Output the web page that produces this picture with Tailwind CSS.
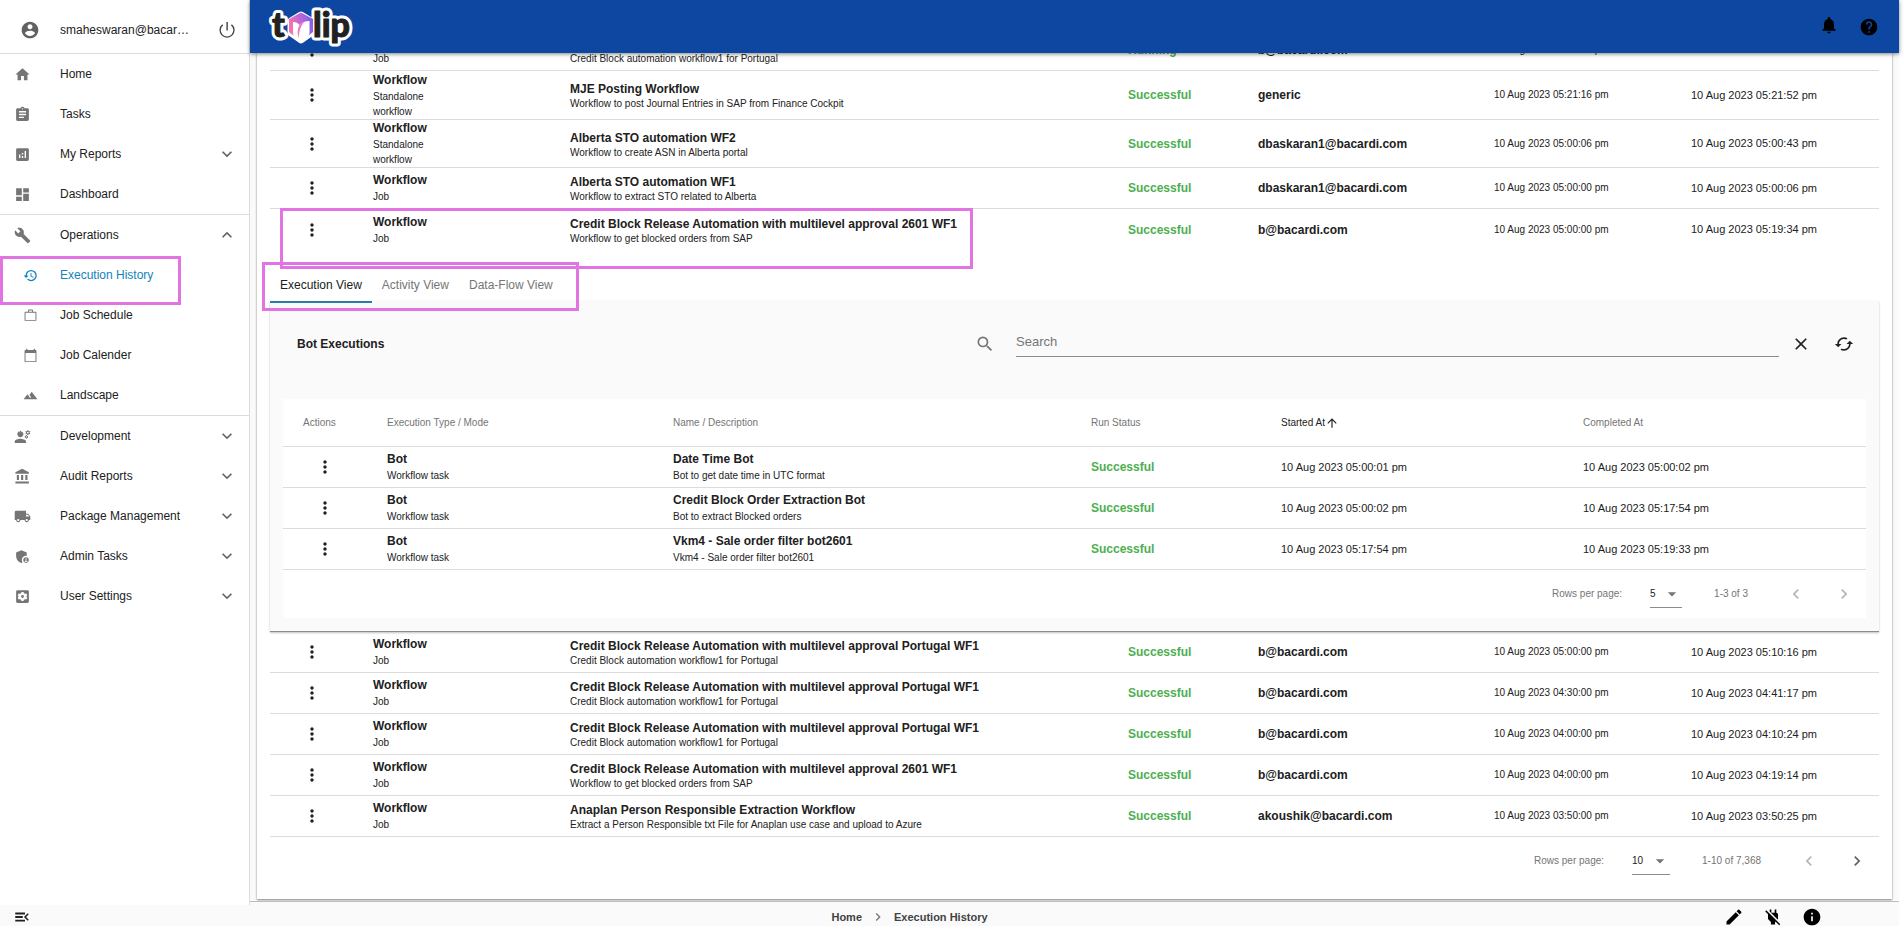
<!DOCTYPE html>
<html lang="en">
<head>
    <meta charset="UTF-8">
    <meta name="viewport" content="width=device-width, initial-scale=1.0">
    <title>Execution History</title>
    <script src="https://cdn.jsdelivr.net/npm/@tailwindcss/browser@4"></script>
</head>
<body class="flex h-screen flex-col overflow-hidden bg-white pr-[5px] pb-[9px] font-['Liberation_Sans',Arial,sans-serif] text-xs text-[#212121]">

    <!-- Icon sprite -->
    <svg class="hidden" xmlns="http://www.w3.org/2000/svg">
        <symbol id="i-account" viewBox="0 0 24 24"><path d="M12 2C6.480 2 2 6.480 2 12s4.480 10 10 10 10-4.480 10-10S17.520 2 12 2zm0 3c1.660 0 3 1.340 3 3s-1.340 3-3 3-3-1.340-3-3 1.340-3 3-3zm0 14.200c-2.500 0-4.710-1.280-6-3.220.03-1.990 4-3.080 6-3.080 1.990 0 5.970 1.090 6 3.080-1.290 1.940-3.500 3.220-6 3.220z"/></symbol>
        <symbol id="i-power" viewBox="0 0 24 24"><path d="M13 2.500h-1.700v10h1.700zm4.900 2.600-1.200 1.200A7.500 7.500 0 1 1 7.400 6.300L6.200 5.100a9.100 9.100 0 1 0 11.700 0z"/></symbol>
        <symbol id="i-home" viewBox="0 0 24 24"><path d="M10 20v-6h4v6h5v-8h3L12 3 2 12h3v8z"/></symbol>
        <symbol id="i-tasks" viewBox="0 0 24 24"><path d="M19 3h-4.180C14.400 1.840 13.300 1 12 1s-2.400.840-2.820 2H5c-1.100 0-2 .9-2 2v14c0 1.100.9 2 2 2h14c1.100 0 2-.9 2-2V5c0-1.100-.9-2-2-2zm-7 0c.55 0 1 .45 1 1s-.45 1-1 1-1-.45-1-1 .45-1 1-1zm2 14H7v-2h7v2zm3-4H7v-2h10v2zm0-4H7V7h10v2z"/></symbol>
        <symbol id="i-reports" viewBox="0 0 24 24"><path d="M19 3H5c-1.100 0-2 .9-2 2v14c0 1.100.9 2 2 2h14c1.100 0 2-.9 2-2V5c0-1.100-.9-2-2-2zM9 17H7v-5h2v5zm4 0h-2v-3h2v3zm0-5h-2v-2h2v2zm4 5h-2V7h2v10z"/></symbol>
        <symbol id="i-dashboard" viewBox="0 0 24 24"><path d="M3 13h8V3H3v10zm0 8h8v-6H3v6zm10 0h8V11h-8v10zm0-18v6h8V3h-8z"/></symbol>
        <symbol id="i-build" viewBox="0 0 24 24"><path d="M22.700 19l-9.100-9.100c.9-2.300.4-5-1.500-6.900-2-2-5-2.400-7.400-1.300L9 6 6 9 1.600 4.700C.4 7.100.9 10.100 2.900 12.100c1.900 1.900 4.600 2.400 6.900 1.500l9.100 9.100c.4.4 1 .4 1.400 0l2.300-2.300c.5-.4.5-1.100.1-1.400z"/></symbol>
        <symbol id="i-history" viewBox="0 0 24 24"><path d="M13 3a9 9 0 0 0-9 9H1l3.890 3.890.07.14L9 12H6c0-3.870 3.130-7 7-7s7 3.130 7 7-3.130 7-7 7c-1.930 0-3.680-.79-4.940-2.060l-1.420 1.420A8.954 8.954 0 0 0 13 21a9 9 0 0 0 0-18zm-1 5v5l4.280 2.540.72-1.210-3.500-2.080V8H12z"/></symbol>
        <symbol id="i-work" viewBox="0 0 24 24"><path d="M14.500 6V4h-5v2h5zM4 7.500v11.500h16V7.500H4zM20 6c1.110 0 1.500.89 1.500 2v11c0 1.110-.39 1.500-1.500 1.500H4c-1.110 0-1.500-.39-1.500-1.500V8c0-1.110.39-2 1.500-2h4V4c0-1.110.890-1.500 2-1.500h4c1.110 0 2 .39 2 1.500v2h4z"/></symbol>
        <symbol id="i-calendar" viewBox="0 0 24 24"><path d="M20 3h-1V1h-2v2H7V1H5v2H4c-1.100 0-1.500.9-1.500 2v16c0 1.100.4 1.500 1.500 1.500h16c1.100 0 1.500-.4 1.500-1.500V5c0-1.100-.4-2-1.500-2zm0 18H4V8h16v13z"/></symbol>
        <symbol id="i-landscape" viewBox="0 0 24 24"><path d="M14 6l-3.750 5 2.850 3.800-1.600 1.200C9.810 13.750 7 10 7 10l-6 8h22L14 6z"/></symbol>
        <symbol id="i-engineering" viewBox="0 0 24 24"><path d="M9 15c-2.670 0-8 1.340-8 4v2h16v-2c0-2.660-5.330-4-8-4zM4.740 9H5c0 2.210 1.790 4 4 4s4-1.790 4-4h.26c.27 0 .49-.22.49-.49v-.02c0-.27-.22-.49-.49-.49H13c0-1.480-.81-2.750-2-3.450v.95c0 .28-.22.5-.5.500s-.5-.22-.5-.5V4.140C9.680 4.060 9.350 4 9 4s-.68.060-1 .14V5.500c0 .28-.22.5-.5.5S7 5.780 7 5.500v-.95C5.810 5.250 5 6.520 5 8h-.26c-.27 0-.49.220-.49.490v.03c0 .26.22.48.49.48zM21.980 6.230l.93-.83-.75-1.300-1.190.390c-.14-.11-.3-.2-.47-.27L20.250 3h-1.500l-.25 1.220c-.17.070-.33.16-.48.27l-1.180-.39-.75 1.300.93.830c-.2.170-.2.350 0 .520l-.93.850.75 1.300 1.200-.38c.13.100.28.180.43.25l.28 1.230h1.500l.27-1.220c.16-.07.3-.15.44-.25l1.190.38.75-1.300-.93-.85c.03-.19.020-.36.010-.530zM19.500 7.750a1.250 1.250 0 1 1 0-2.500 1.250 1.250 0 0 1 0 2.500zM19.400 10.790l-.85.280c-.1-.08-.21-.14-.33-.19l-.18-.88h-1.070l-.18.870c-.12.050-.24.120-.34.19l-.84-.28-.54.930.66.590c-.1.130-.1.250 0 .370l-.66.610.54.930.86-.27c.1.070.2.130.31.180l.18.880h1.070l.19-.87c.11-.05.22-.11.32-.18l.85.270.54-.93-.66-.61c.1-.13.1-.25 0-.37l.66-.590-.53-.93zm-1.900 2.600a.89.89 0 1 1 0-1.780.89.89 0 0 1 0 1.780z"/></symbol>
        <symbol id="i-bank" viewBox="0 0 24 24"><path d="M4 10v7h3v-7H4zm6 0v7h3v-7h-3zM2 22h19v-3H2v3zm14-12v7h3v-7h-3zm-4.500-9L2 6v2h19V6l-9.500-5z"/></symbol>
        <symbol id="i-truck" viewBox="0 0 24 24"><path d="M20 8h-3V4H3c-1.100 0-2 .9-2 2v11h2c0 1.660 1.340 3 3 3s3-1.340 3-3h6c0 1.660 1.340 3 3 3s3-1.340 3-3h2v-5l-3-4zM6 18.500c-.83 0-1.500-.67-1.500-1.500s.67-1.500 1.500-1.500 1.500.67 1.500 1.500-.67 1.500-1.500 1.500zm13.500-9l1.960 2.500H17V9.500h2.500zm-1.500 9c-.83 0-1.500-.67-1.500-1.500s.67-1.500 1.500-1.500 1.500.67 1.500 1.500-.67 1.500-1.500 1.500z"/></symbol>
        <symbol id="i-admin" viewBox="0 0 24 24"><path d="M17 11c.34 0 .67.040 1 .09V6.270L10.500 3 3 6.270v4.910c0 4.540 3.200 8.790 7.500 9.820.55-.13 1.080-.32 1.600-.55-.69-.98-1.100-2.170-1.100-3.450 0-3.310 2.690-6 6-6z"/><path d="M17 13c-2.210 0-4 1.790-4 4s1.790 4 4 4 4-1.790 4-4-1.790-4-4-4zm0 1.380c.62 0 1.120.51 1.120 1.120s-.51 1.120-1.120 1.120-1.120-.51-1.120-1.120.5-1.120 1.120-1.120zm0 5.370c-.93 0-1.740-.46-2.240-1.170.05-.72 1.510-1.080 2.240-1.080s2.190.36 2.240 1.080c-.5.710-1.310 1.170-2.240 1.170z"/></symbol>
        <symbol id="i-settings" viewBox="0 0 24 24"><path fill-rule="evenodd" d="M5 3h14a2 2 0 0 1 2 2v14a2 2 0 0 1-2 2H5a2 2 0 0 1-2-2V5a2 2 0 0 1 2-2zm5.500 2.500L10 7.400l-1.400.8-1.900-.6-1.500 2.600L6.600 12l-1.400 1.800 1.500 2.600 1.900-.6 1.400.8.5 1.900h3l.5-1.900 1.400-.8 1.900.6 1.500-2.600-1.400-1.800 1.400-1.800-1.500-2.600-1.900.6-1.400-.8-.5-1.900h-3zM12 10a2 2 0 1 1 0 4 2 2 0 0 1 0-4z"/></symbol>
        <symbol id="i-down" viewBox="0 0 24 24"><path d="M16.590 8.590 12 13.170 7.410 8.590 6 10l6 6 6-6z"/></symbol>
        <symbol id="i-up" viewBox="0 0 24 24"><path d="M12 8l-6 6 1.410 1.410L12 10.830l4.590 4.580L18 14z"/></symbol>
        <symbol id="i-left" viewBox="0 0 24 24"><path d="M15.410 7.410 14 6l-6 6 6 6 1.410-1.410L10.830 12z"/></symbol>
        <symbol id="i-right" viewBox="0 0 24 24"><path d="M10 6 8.590 7.410 13.170 12l-4.580 4.590L10 18l6-6z"/></symbol>
        <symbol id="i-drop" viewBox="0 0 24 24"><path d="M7 10l5 5 5-5z"/></symbol>
        <symbol id="i-more" viewBox="0 0 24 24"><path d="M12 8c1.100 0 2-.9 2-2s-.9-2-2-2-2 .9-2 2 .9 2 2 2zm0 2c-1.100 0-2 .9-2 2s.9 2 2 2 2-.9 2-2-.9-2-2-2zm0 6c-1.100 0-2 .9-2 2s.9 2 2 2 2-.9 2-2-.9-2-2-2z"/></symbol>
        <symbol id="i-bell" viewBox="0 0 24 24"><path d="M12 22c1.100 0 2-.9 2-2h-4c0 1.100.9 2 2 2zm6-6v-5c0-3.070-1.630-5.640-4.500-6.320V4c0-.83-.67-1.500-1.500-1.500s-1.500.67-1.500 1.500v.68C7.640 5.360 6 7.920 6 11v5l-2 2v1h16v-1l-2-2z"/></symbol>
        <symbol id="i-help" viewBox="0 0 24 24"><path d="M12 2C6.480 2 2 6.480 2 12s4.480 10 10 10 10-4.480 10-10S17.520 2 12 2zm1 17h-2v-2h2v2zm2.070-7.750-.9.920C13.450 12.900 13 13.500 13 15h-2v-.5c0-1.100.45-2.100 1.170-2.830l1.240-1.260c.37-.36.59-.86.59-1.410 0-1.100-.9-2-2-2s-2 .9-2 2H8c0-2.210 1.790-4 4-4s4 1.790 4 4c0 .88-.36 1.680-.93 2.250z"/></symbol>
        <symbol id="i-search" viewBox="0 0 24 24"><path d="M15.500 14h-.79l-.28-.27A6.471 6.471 0 0 0 16 9.500 6.500 6.500 0 1 0 9.500 16c1.610 0 3.090-.59 4.230-1.570l.27.28v.79l5 4.990L20.490 19l-4.990-5zm-6 0C7.010 14 5 11.990 5 9.500S7.010 5 9.500 5 14 7.010 14 9.500 11.990 14 9.500 14z"/></symbol>
        <symbol id="i-close" viewBox="0 0 24 24"><path d="M19 6.410 17.590 5 12 10.590 6.410 5 5 6.410 10.590 12 5 17.590 6.410 19 12 13.410 17.590 19 19 17.590 13.410 12z"/></symbol>
        <symbol id="i-refresh" viewBox="0 0 24 24"><path d="M19 8l-4 4h3c0 3.310-2.690 6-6 6-1.010 0-1.970-.25-2.800-.7l-1.460 1.460C8.970 19.540 10.430 20 12 20c4.420 0 8-3.580 8-8h3l-4-4zM6 12c0-3.310 2.690-6 6-6 1.010 0 1.970.25 2.800.7l1.460-1.460C15.030 4.460 13.570 4 12 4c-4.420 0-8 3.580-8 8H1l4 4 4-4H6z"/></symbol>
        <symbol id="i-arrow-up" viewBox="0 0 24 24"><path d="M4 12l1.410 1.410L11 7.830V20h2V7.830l5.580 5.590L20 12l-8-8z"/></symbol>
        <symbol id="i-menu-open" viewBox="0 0 24 24"><path d="M3 18h13v-2.500H3V18zm0-4.800h10v-2.500H3v2.500zM3 6v2.500h13V6H3zm18 9.590L17.420 12 21 8.410 19.590 7l-5 5 5 5L21 15.590z"/></symbol>
        <symbol id="i-edit" viewBox="0 0 24 24"><path d="M3 17.250V21h3.750L17.810 9.940l-3.750-3.750L3 17.250zM20.710 7.040a.996.996 0 0 0 0-1.410l-2.340-2.340a.996.996 0 0 0-1.410 0l-1.830 1.830 3.750 3.750 1.830-1.830z"/></symbol>
        <symbol id="i-plug-off" viewBox="0 0 24 24"><path d="M18 14.490V9c0-1-1.010-2.010-2-2V3h-2v4h-4V3H8v2.480l9.510 9.500.49-.49zm-1.760 1.770L7.200 7.200l-.01.010L3.980 4 2.710 5.250l3.360 3.360C6.040 8.740 6 8.870 6 9v5.480L9.500 18v3h5v-3l.48-.48L19.450 22l1.260-1.280-4.470-4.460z"/></symbol>
        <symbol id="i-info" viewBox="0 0 24 24"><path d="M12 2C6.480 2 2 6.480 2 12s4.480 10 10 10 10-4.480 10-10S17.520 2 12 2zm1 15h-2v-6h2v6zm0-8h-2V7h2v2z"/></symbol>
    </svg>

    <div class="flex min-h-0 flex-1">
        <!-- Side Menu -->
        <aside class="relative w-[250px] shrink-0 border-r border-[#dcdcdc] bg-white">
            <div class="flex h-[54px] items-center border-b border-[#dcdcdc] pt-1.5 pr-3">
                <span class="flex w-[60px] justify-center text-[#616161]"><svg class="size-5 fill-current"><use href="#i-account"/></svg></span>
                <span class="flex-1">smaheswaran@bacar…</span>
                <button type="button" aria-label="Log out"><svg class="size-5 fill-[#424242]"><use href="#i-power"/></svg></button>
            </div>
            <nav id="side-menu"></nav>
            <div class="pointer-events-none absolute top-64 left-0 h-[49px] w-[181px] border-3 border-[#e273e2]"></div>
        </aside>

        <!-- Main Content -->
        <div class="relative flex min-w-0 flex-1 flex-col bg-[#fafafa] pb-[3px]">
            <header class="relative z-10 flex h-[53px] shrink-0 items-center bg-[#0d47a1] pr-5 pl-[18px] shadow-[0_1px_4px_rgba(0,0,0,0.5)]">
                <a href="#" aria-label="tulip">
                    <svg class="h-[46px] w-[88px]" viewBox="0 0 88 46">
                        <defs>
                            <linearGradient id="hex" x1="0" y1="0.3" x2="1" y2="0">
                                <stop offset="0" stop-color="#f472b6"/>
                                <stop offset="0.5" stop-color="#b366d9"/>
                                <stop offset="1" stop-color="#6d5ff2"/>
                            </linearGradient>
                        </defs>
                        <g class="font-['Lato'] text-[34px] font-black" stroke-linejoin="round">
                            <g fill="#fff" stroke="#fff" stroke-width="7">
                                <text x="4" y="33">t</text>
                                <text x="45" y="33">lip</text>
                                <path d="M33 11l10 6v12l-10 7-10-7V17z"/>
                            </g>
                            <g fill="#212121" stroke="#212121" stroke-width="1">
                                <text x="4" y="33">t</text>
                                <text x="45" y="33">lip</text>
                            </g>
                        </g>
                        <path d="M33 8.500l12 6.500v13l-5 4H26l-5-4V15z" fill="url(#hex)"/>
                        <path d="M25 18c3 0 5 1 6.500 3 2.500-3 5.500-4 10-4v11c0 6-4 9-8.500 10-4.500-1-8-4-8-10z" fill="#fff"/>
                        <path d="M31 34c-2-5-1.500-9 .5-13 1.500-2 3-3 5-3.500-3.500 4-5.500 9-5.500 16.500z" fill="#e879c6"/>
                    </svg>
                </a>
                <div class="ml-auto flex gap-5">
                    <button type="button" aria-label="Notifications" class="pb-1"><svg class="size-5 fill-black"><use href="#i-bell"/></svg></button>
                    <button type="button" aria-label="Help"><svg class="size-5 fill-black"><use href="#i-help"/></svg></button>
                </div>
            </header>

            <main class="flex min-h-0 flex-1 flex-col overflow-hidden border-b border-[#bdbdbd] px-[7px] pb-0.5">
                <div class="min-h-0 flex-1 bg-white px-[13px] shadow-[0_1px_2px_rgba(0,0,0,0.5)]">
                    <table class="-mt-[23px] w-full table-fixed border-separate border-spacing-0 text-left">
                        <colgroup>
                            <col class="w-[103px]"><col class="w-[197px]"><col><col class="w-[130px]"><col class="w-[236px]"><col class="w-[197px]"><col class="w-[188px]">
                        </colgroup>
                        <tbody id="rows-before"></tbody>
                        <tbody>
                            <tr>
                                <td colspan="7">
                                    <div role="tablist" class="-mb-0.5 flex h-[53px] text-[#757575]">
                                        <button type="button" role="tab" aria-selected="true" class="border-b-2 border-[#2a7ca8] px-2.5 pt-[26px] pb-2 text-[#212121]">Execution View</button>
                                        <button type="button" role="tab" class="border-b-2 border-transparent px-2.5 pt-[26px] pb-2">Activity View</button>
                                        <button type="button" role="tab" class="border-b-2 border-transparent px-2.5 pt-[26px] pb-2">Data-Flow View</button>
                                    </div>
                                    <section class="border-b border-[#8c8c8c] bg-[#fafafa] px-[13px] pb-[13px] shadow-[0_1px_2px_rgba(0,0,0,0.25)]">
                                        <div class="flex h-[98px] items-center pr-3 pb-3 pl-3.5">
                                            <h2 class="flex-1 font-bold">Bot Executions</h2>
                                            <label for="bot-search" aria-label="Search" class="mr-[21px]"><svg class="size-5 fill-[#757575]"><use href="#i-search"/></svg></label>
                                            <input id="bot-search" type="text" placeholder="Search" class="h-[26px] w-[49%] border-b border-[#8c8c8c] pb-1 text-[13px] outline-none placeholder:text-[#757575]">
                                            <button type="button" aria-label="Clear" class="ml-3"><svg class="size-5 fill-[#212121]"><use href="#i-close"/></svg></button>
                                            <button type="button" aria-label="Refresh" class="ml-[23px]"><svg class="size-5 fill-[#212121]"><use href="#i-refresh"/></svg></button>
                                        </div>
                                        <div class="bg-white">
                                            <table class="w-full table-fixed border-separate border-spacing-0 text-left">
                                                <colgroup>
                                                    <col class="w-[104px]"><col class="w-[286px]"><col><col class="w-[190px]"><col class="w-[302px]"><col class="w-[283px]">
                                                </colgroup>
                                                <thead class="text-[10px] text-[#757575]">
                                                    <tr>
                                                        <th class="h-12 border-b border-[#dcdcdc] pl-5 font-normal">Actions</th>
                                                        <th class="border-b border-[#dcdcdc] font-normal">Execution Type / Mode</th>
                                                        <th class="border-b border-[#dcdcdc] font-normal">Name / Description</th>
                                                        <th class="border-b border-[#dcdcdc] font-normal">Run Status</th>
                                                        <th class="border-b border-[#dcdcdc] font-normal text-[#212121]"><span class="flex items-center">Started At<svg class="size-3.5 fill-current"><use href="#i-arrow-up"/></svg></span></th>
                                                        <th class="border-b border-[#dcdcdc] font-normal">Completed At</th>
                                                    </tr>
                                                </thead>
                                                <tbody id="bot-rows"></tbody>
                                            </table>
                                            <div class="flex h-12 items-center justify-end text-[10px] text-[#757575]">
                                                <label for="bot-size" class="mr-7">Rows per page:</label>
                                                <div class="relative mr-8 w-8">
                                                    <select id="bot-size" class="block h-7 w-full appearance-none border-b border-[#8c8c8c] text-[#212121]"><option>5</option></select>
                                                    <svg class="pointer-events-none absolute top-1 right-0 size-5 fill-[#757575]"><use href="#i-drop"/></svg>
                                                </div>
                                                <span class="mr-[26px]">1-3 of 3</span>
                                                <button type="button" aria-label="Previous page" disabled class="mr-1 flex w-11 justify-center"><svg class="size-5 fill-[#b5b5b5]"><use href="#i-left"/></svg></button>
                                                <button type="button" aria-label="Next page" disabled class="flex w-11 justify-center"><svg class="size-5 fill-[#b5b5b5]"><use href="#i-right"/></svg></button>
                                            </div>
                                        </div>
                                    </section>
                                </td>
                            </tr>
                        </tbody>
                        <tbody id="rows-after"></tbody>
                    </table>
                    <div class="flex h-12 items-center justify-end text-[10px] text-[#757575]">
                        <label for="page-size" class="mr-7">Rows per page:</label>
                        <div class="relative mr-8 w-[38px]">
                            <select id="page-size" class="block h-7 w-full appearance-none border-b border-[#8c8c8c] text-[#212121]"><option>10</option></select>
                            <svg class="pointer-events-none absolute top-1 right-0 size-5 fill-[#757575]"><use href="#i-drop"/></svg>
                        </div>
                        <span class="mr-[26px]">1-10 of 7,368</span>
                        <button type="button" aria-label="Previous page" disabled class="mr-1 flex w-11 justify-center"><svg class="size-5 fill-[#b5b5b5]"><use href="#i-left"/></svg></button>
                        <button type="button" aria-label="Next page" class="flex w-11 justify-center"><svg class="size-5 fill-[#616161]"><use href="#i-right"/></svg></button>
                    </div>
                </div>
            </main>

            <!-- Highlights -->
            <div class="pointer-events-none absolute top-52 left-[30px] h-[61px] w-[693px] border-3 border-[#e273e2]"></div>
            <div class="pointer-events-none absolute top-[262px] left-3 h-[49px] w-[317px] border-3 border-[#e273e2]"></div>
        </div>
    </div>

    <!-- Footer -->
    <footer class="flex h-[21px] shrink-0 items-center overflow-hidden bg-[#fafafa] pt-[3px]">
        <div class="flex flex-1 pl-[13px]">
            <button type="button" aria-label="Collapse menu"><svg class="size-[18px] fill-[#212121]"><use href="#i-menu-open"/></svg></button>
        </div>
        <nav class="mr-4 flex items-center gap-2 text-[11px] font-bold text-[#424242]">
            <a href="#">Home</a>
            <svg class="size-4 fill-[#757575]"><use href="#i-right"/></svg>
            <a href="#">Execution History</a>
        </nav>
        <div class="flex flex-1 justify-end gap-[19px] pr-[77px]">
            <button type="button" aria-label="Edit"><svg class="size-5 fill-black"><use href="#i-edit"/></svg></button>
            <button type="button" aria-label="Disconnect"><svg class="size-5 fill-black"><use href="#i-plug-off"/></svg></button>
            <button type="button" aria-label="Info"><svg class="size-5 fill-black"><use href="#i-info"/></svg></button>
        </div>
    </footer>

    <script>
        const menu = [
            [['home', 'Home'], ['tasks', 'Tasks'], ['reports', 'My Reports', 'down'], ['dashboard', 'Dashboard']],
            [['build', 'Operations', 'up'], ['history', 'Execution History', 'sub'], ['work', 'Job Schedule', 'sub'], ['calendar', 'Job Calender', 'sub'], ['landscape', 'Landscape', 'sub']],
            [['engineering', 'Development', 'down'], ['bank', 'Audit Reports', 'down'], ['truck', 'Package Management', 'down'], ['admin', 'Admin Tasks', 'down'], ['settings', 'User Settings', 'down']],
        ];

        const portugal = ['Credit Block Release Automation with multilevel approval Portugal WF1', 'Credit Block automation workflow1 for Portugal'];
        const blocked = ['Credit Block Release Automation with multilevel approval 2601 WF1', 'Workflow to get blocked orders from SAP'];

        // mode, name, description, status, user, started, completed
        const before = [
            ['Job', ...portugal, 'Running', 'b@bacardi.com', '05:30:00', ''],
            ['Standalone workflow', 'MJE Posting Workflow', 'Workflow to post Journal Entries in SAP from Finance Cockpit', 'Successful', 'generic', '05:21:16', '05:21:52'],
            ['Standalone workflow', 'Alberta STO automation WF2', 'Workflow to create ASN in Alberta portal', 'Successful', 'dbaskaran1@bacardi.com', '05:00:06', '05:00:43'],
            ['Job', 'Alberta STO automation WF1', 'Workflow to extract STO related to Alberta', 'Successful', 'dbaskaran1@bacardi.com', '05:00:00', '05:00:06'],
            ['Job', ...blocked, 'Successful', 'b@bacardi.com', '05:00:00', '05:19:34'],
        ];
        const after = [
            ['Job', ...portugal, 'Successful', 'b@bacardi.com', '05:00:00', '05:10:16'],
            ['Job', ...portugal, 'Successful', 'b@bacardi.com', '04:30:00', '04:41:17'],
            ['Job', ...portugal, 'Successful', 'b@bacardi.com', '04:00:00', '04:10:24'],
            ['Job', ...blocked, 'Successful', 'b@bacardi.com', '04:00:00', '04:19:14'],
            ['Job', 'Anaplan Person Responsible Extraction Workflow', 'Extract a Person Responsible txt File for Anaplan use case and upload to Azure', 'Successful', 'akoushik@bacardi.com', '03:50:00', '03:50:25'],
        ];
        const bots = [
            ['Date Time Bot', 'Bot to get date time in UTC format', '05:00:01', '05:00:02'],
            ['Credit Block Order Extraction Bot', 'Bot to extract Blocked orders', '05:00:02', '05:17:54'],
            ['Vkm4 - Sale order filter bot2601', 'Vkm4 - Sale order filter bot2601', '05:17:54', '05:19:33'],
        ];

        const date = (time) => time ? `10 Aug 2023 ${time} pm` : '';
        const more = '<button type="button" aria-label="Row actions" class="block"><svg class="size-5 fill-[#212121]"><use href="#i-more"/></svg></button>';

        function menuItem([icon, label, kind]) {
            const active = label === 'Execution History';
            const sub = kind === 'sub';
            return `<a href="#" class="flex h-10 items-center pr-3 ${active ? 'text-[#1183b9]' : ''}">
                <span class="flex w-[60px] justify-center ${sub ? '' : 'pr-4'} ${active ? '' : 'text-[#757575]'}"><svg class="${sub ? 'size-[15px]' : 'size-[17px]'} fill-current"><use href="#i-${icon}"/></svg></span>
                <span class="flex-1">${label}</span>
                ${kind && !sub ? `<svg class="size-5 fill-[#616161]"><use href="#i-${kind}"/></svg>` : ''}
            </a>`;
        }

        function workflowRow([mode, name, desc, status, user, started, completed], line) {
            const td = line ? 'border-b border-[#dcdcdc]' : '';
            return `<tr class="${name.startsWith('MJE') ? 'h-[49px]' : 'h-[41px]'}">
                <td class="${td} pl-8">${more}</td>
                <td class="${td}"><div class="leading-[17px] font-bold">Workflow</div><div class="w-20 text-[10px] leading-[15px]">${mode}</div></td>
                <td class="${td} pt-[3px]"><div class="leading-[14px] font-bold">${name}</div><div class="text-[10px] leading-[15px]">${desc}</div></td>
                <td class="${td} font-bold text-[#4caf50]">${status}</td>
                <td class="${td} font-bold">${user}</td>
                <td class="${td} text-[10px]">${date(started)}</td>
                <td class="${td} text-[11px]">${date(completed)}</td>
            </tr>`;
        }

        function botRow([name, desc, started, completed]) {
            const td = 'border-b border-[#dcdcdc]';
            return `<tr class="h-[41px]">
                <td class="${td} pl-8">${more}</td>
                <td class="${td} pb-0.5"><div class="leading-[18px] font-bold">Bot</div><div class="text-[10px] leading-[15px]">Workflow task</div></td>
                <td class="${td} pb-0.5"><div class="leading-[18px] font-bold">${name}</div><div class="text-[10px] leading-[15px]">${desc}</div></td>
                <td class="${td} font-bold text-[#4caf50]">Successful</td>
                <td class="${td} text-[11px]">${date(started)}</td>
                <td class="${td} text-[11px]">${date(completed)}</td>
            </tr>`;
        }

        document.getElementById('side-menu').innerHTML = menu.map((group) => group.map(menuItem).join('')).join('<hr class="border-[#dcdcdc]">');
        document.getElementById('rows-before').innerHTML = before.map((row, i) => workflowRow(row, i < before.length - 1)).join('');
        document.getElementById('rows-after').innerHTML = after.map((row) => workflowRow(row, true)).join('');
        document.getElementById('bot-rows').innerHTML = bots.map(botRow).join('');
    </script>
</body>
</html>
